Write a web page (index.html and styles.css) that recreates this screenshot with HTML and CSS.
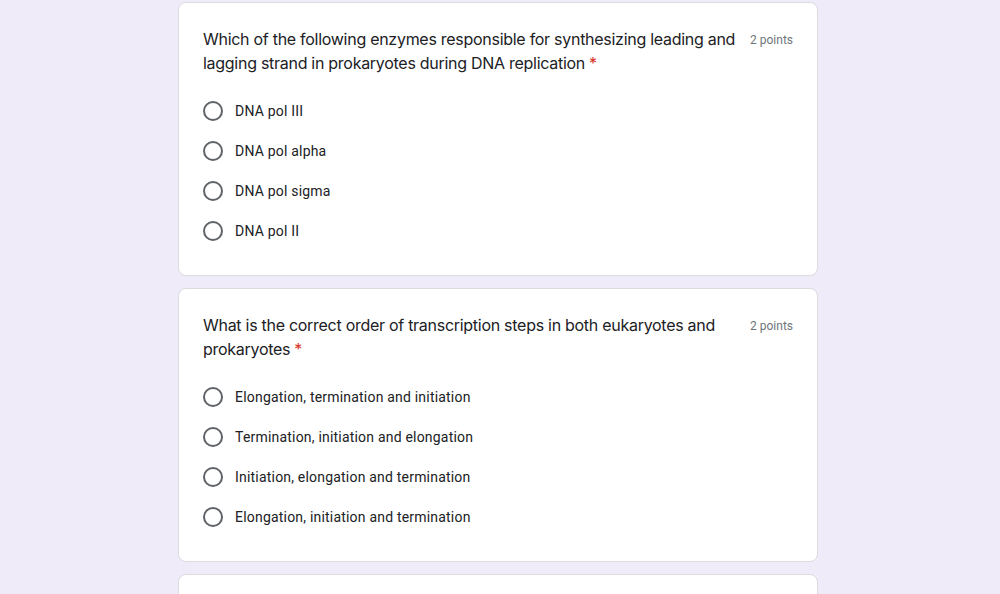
FILE: index.html
```html
<!DOCTYPE html>
<html lang="en">
<head>
<meta charset="utf-8">
<title>Quiz</title>
<link rel="stylesheet" href="styles.css">
</head>
<body>
<div class="form">
  <div class="card">
    <div class="head">
      <div class="title">Which of the following enzymes responsible for synthesizing leading and lagging strand in prokaryotes during DNA replication<span class="req">*</span></div>
      <div class="points">2 points</div>
    </div>
    <div class="options">
      <label class="opt"><span class="radio"></span><span class="lbl">DNA pol III</span></label>
      <label class="opt"><span class="radio"></span><span class="lbl">DNA pol alpha</span></label>
      <label class="opt"><span class="radio"></span><span class="lbl">DNA pol sigma</span></label>
      <label class="opt"><span class="radio"></span><span class="lbl">DNA pol II</span></label>
    </div>
  </div>
  <div class="card">
    <div class="head">
      <div class="title">What is the correct order of transcription steps in both eukaryotes and prokaryotes<span class="req">*</span></div>
      <div class="points">2 points</div>
    </div>
    <div class="options">
      <label class="opt"><span class="radio"></span><span class="lbl">Elongation, termination and initiation</span></label>
      <label class="opt"><span class="radio"></span><span class="lbl">Termination, initiation and elongation</span></label>
      <label class="opt"><span class="radio"></span><span class="lbl">Initiation, elongation and termination</span></label>
      <label class="opt"><span class="radio"></span><span class="lbl">Elongation, initiation and termination</span></label>
    </div>
  </div>
  <div class="card card-next"></div>
</div>
</body>
</html>
```

FILE: styles.css
```css
html, body {
  margin: 0;
  padding: 0;
  background: #f0ebf8;
}
body {
  padding: 2px 4px 0 0;
  font-family: Roboto, "Liberation Sans", Arial, sans-serif;
  color: #202124;
  overflow: hidden;
  height: 594px;
  box-sizing: border-box;
}
.form {
  width: 640px;
  margin: 0 auto;
  display: flex;
  flex-direction: column;
  gap: 12px;
}
.card {
  background: #fff;
  border: 1px solid #dadce0;
  border-radius: 8px;
  padding: 24px;
}
.card-next {
  height: 120px;
}
.head {
  display: flex;
  align-items: flex-start;
  gap: 14px;
}
.title {
  flex: 1;
  font-family: Inter, Roboto, sans-serif;
  font-size: 16px;
  line-height: 24px;
  letter-spacing: -0.28px;
  color: #202124;
}
.req {
  color: #d93025;
  margin-left: 4px;
}
.points {
  font-size: 12px;
  line-height: 24px;
  padding-top: 1px;
  color: #70757a;
  white-space: nowrap;
}
.options {
  margin-top: 16px;
  display: flex;
  flex-direction: column;
}
.opt {
  display: flex;
  align-items: center;
  height: 40px;
  gap: 12px;
}
.radio {
  width: 20px;
  height: 20px;
  box-sizing: border-box;
  border: 2px solid #5f6368;
  border-radius: 50%;
  flex: none;
}
.lbl {
  font-size: 14px;
  letter-spacing: .2px;
  color: #202124;
}
```
